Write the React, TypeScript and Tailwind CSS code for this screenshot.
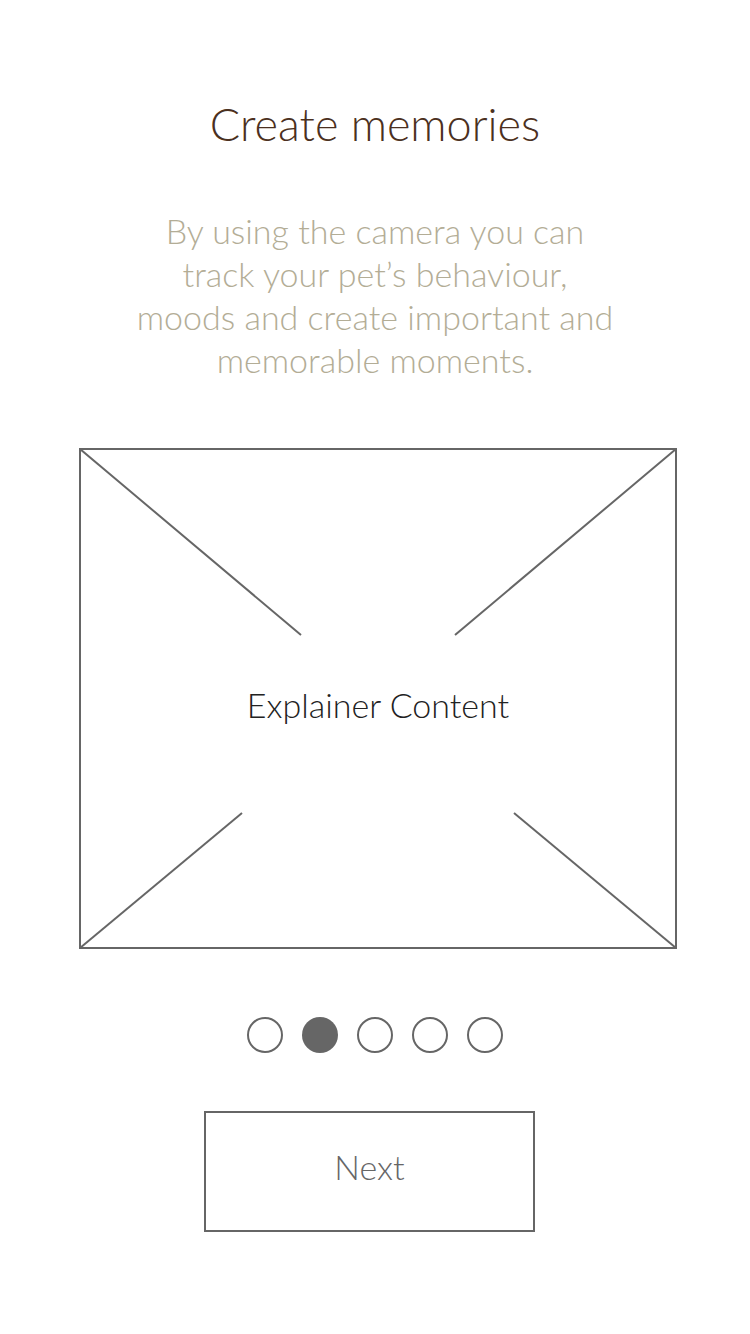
import React from "react";

export default function App() {
  const font = { fontFamily: "Lato, 'Open Sans', sans-serif" };
  return (
    <div className="w-[750px] h-[1334px] bg-white flex flex-col" style={font}>
      <h1 className="mt-[94px] text-center text-[45px] leading-[60px] font-light text-[#4b3020]">
        Create memories
      </h1>
      <p className="mt-[55px] text-center text-[34px] leading-[43px] font-light text-[#b3ad96]">
        By using the camera you can
        <br />
        track your pet’s behaviour,
        <br />
        moods and create important and
        <br />
        memorable moments.
      </p>
      <div className="relative mt-[67px] ml-[79px] w-[598px] h-[501px] border-2 border-[#666666] flex items-center justify-center">
        <svg className="absolute left-[-2px] top-[-2px]" width="598" height="501" viewBox="0 0 598 501">
          <g stroke="#666666" strokeWidth="2" fill="none">
            <line x1="1" y1="1" x2="222" y2="187" />
            <line x1="597" y1="1" x2="376" y2="187" />
            <line x1="1" y1="500" x2="163" y2="365" />
            <line x1="597" y1="500" x2="435" y2="365" />
          </g>
        </svg>
        <span className="relative mt-[12px] text-[34px] leading-[40px] font-light text-[#222222]">
          Explainer Content
        </span>
      </div>
      <div className="mt-[68px] flex justify-center gap-[19px] ml-[-1px]">
        <div className="w-[36px] h-[36px] rounded-full border-2 border-[#666666]" />
        <div className="w-[36px] h-[36px] rounded-full bg-[#666666]" />
        <div className="w-[36px] h-[36px] rounded-full border-2 border-[#666666]" />
        <div className="w-[36px] h-[36px] rounded-full border-2 border-[#666666]" />
        <div className="w-[36px] h-[36px] rounded-full border-2 border-[#666666]" />
      </div>
      <button className="mt-[58px] ml-[204px] w-[331px] h-[121px] border-2 border-[#666666] flex items-center justify-center pb-[10px] text-[34px] font-light text-[#666666]">
        Next
      </button>
    </div>
  );
}
